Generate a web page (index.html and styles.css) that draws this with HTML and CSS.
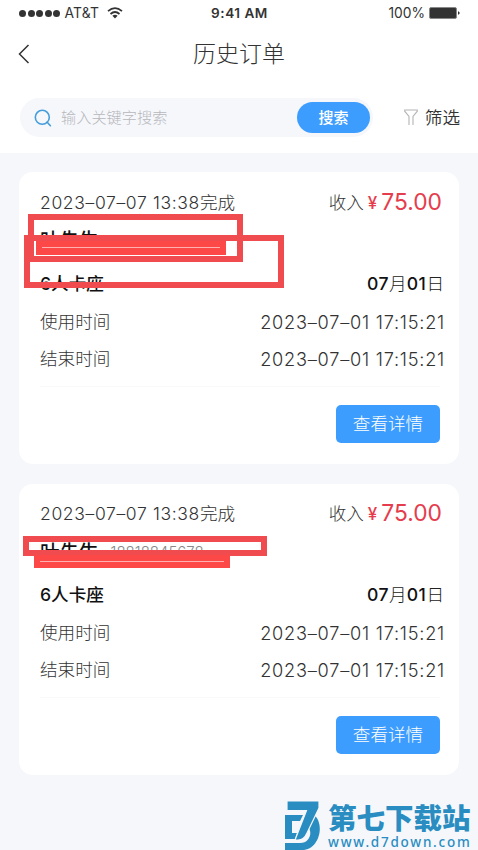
FILE: index.html
```html
<!DOCTYPE html>
<html lang="zh-CN">
<head>
<meta charset="utf-8">
<title>历史订单</title>
<link rel="stylesheet" href="styles.css">
</head>
<body>
<header class="top">
  <div class="status">
    <div class="carrier"><i class="dot"></i><i class="dot"></i><i class="dot"></i><i class="dot"></i><i class="dot"></i><span class="net">AT&amp;T</span>
      <svg class="wifi" width="16" height="12" viewBox="0 0 16 12"><g fill="none" stroke="#333" stroke-width="1.7"><path d="M1 4.2Q8-1.8 15 4.2"/><path d="M3.5 7Q8 3 12.5 7"/></g><path d="M5.4 8.8Q8 6.7 10.6 8.8L8 11.4z" fill="#333"/></svg>
    </div>
    <div class="clock">9:41 AM</div>
    <div class="power"><span>100%</span><svg width="31" height="12" viewBox="0 0 31 12"><rect x=".5" y=".5" width="27" height="11" rx="1.5" fill="#333" stroke="#888"/><path d="M29 4l2 2-2 2z" fill="#333"/></svg></div>
  </div>
  <div class="nav">
    <svg class="back" width="12" height="20" viewBox="0 0 12 20"><path d="M10.5 1L1.5 10l9 9" fill="none" stroke="#333" stroke-width="1.5"/></svg>
    <h1 class="title">历史订单</h1>
  </div>
  <div class="tools">
    <div class="search">
      <svg width="18" height="18" viewBox="0 0 18 18" fill="none" stroke="#459edb" stroke-width="1.6"><circle cx="8.3" cy="8.3" r="7"/><path d="M13 13l3.4 3.7" stroke-linecap="round"/></svg>
      <span class="hint">输入关键字搜索</span>
      <span class="go">搜索</span>
    </div>
    <div class="filter"><svg width="14" height="17" viewBox="0 0 14 17" fill="none" stroke="#b4b4b4" stroke-width="1.1"><path d="M5 16V7.5L.7 2.2V1h12.6v1.2L9 7.5V16"/></svg><span>筛选</span></div>
  </div>
</header>
<main class="orders">
  <article class="card">
    <div class="row first"><div class="done"><span class="num">2023–07–07 13:38</span>完成</div><div class="income">收入<span class="yen">¥</span><span class="amount">75.00</span></div></div>
    <div class="row guest"><b class="name">叶先生</b></div>
    <div class="row seat"><b class="seat-name">6人卡座</b><div class="day"><b>07</b>月<b>01</b>日</div></div>
    <div class="row"><span>使用时间</span><span class="num time">2023–07–01 17:15:21</span></div>
    <div class="row"><span>结束时间</span><span class="num time">2023–07–01 17:15:21</span></div>
    <div class="foot"><span class="detail">查看详情</span></div>
    <i class="frame frame-a"></i><i class="frame frame-b"></i><i class="bar bar-a"></i>
  </article>
  <article class="card">
    <div class="row first"><div class="done"><span class="num">2023–07–07 13:38</span>完成</div><div class="income">收入<span class="yen">¥</span><span class="amount">75.00</span></div></div>
    <div class="row guest second"><b class="name">叶先生</b><span class="phone">18818845678</span></div>
    <div class="row seat"><b class="seat-name">6人卡座</b><div class="day"><b>07</b>月<b>01</b>日</div></div>
    <div class="row"><span>使用时间</span><span class="num time">2023–07–01 17:15:21</span></div>
    <div class="row"><span>结束时间</span><span class="num time">2023–07–01 17:15:21</span></div>
    <div class="foot"><span class="detail">查看详情</span></div>
    <i class="frame frame-c"></i><i class="bar bar-c"></i>
  </article>
</main>
<div class="mark">
  <svg width="36" height="49" viewBox="0 0 36 49"><path d="M0 14h18l-3 6H7v10L0 38z" fill="#298dc1"/><path d="M0 38V24h7v8h5l-2 6z" fill="#298dc1"/><path d="M29 14c11 8 6 35-12 35H0v-7h15c11 0 13-13 7-17z" fill="#298dc1"/><path d="M2 0h32v7L22 32q-3 7-9 7H10L21.500 9.500H2z" fill="#298dc1" stroke="#f5f7fb" stroke-width="1.200"/></svg>
  <div class="site"><div class="site-name">第七下载站</div><div class="site-url">www.d7down.com</div></div>
</div>
</body>
</html>
```
FILE: styles.css
```css
* { box-sizing: border-box; }
body {
  margin: 0;
  height: 850px;
  overflow: hidden;
  position: relative;
  background: #f5f7fb;
  color: #333;
  font-family: Inter, "Noto Sans CJK SC", sans-serif;
  font-weight: 300;
}
.top { height: 153px; background: #fff; }
.status {
  height: 26px;
  padding: 0 18px 0 19px;
  display: grid;
  grid-template-columns: 1fr auto 1fr;
  align-items: center;
  font-size: 13.8px;
  font-weight: 400;
}
.carrier { display: flex; align-items: center; gap: 1.5px; }
.dot { width: 7px; height: 7px; border-radius: 50%; background: #333; }
.net { margin-left: 3px; letter-spacing: .2px; }
.wifi { margin-left: 6px; }
.clock { font-weight: 600; font-size: 13.6px; letter-spacing: .5px; }
.power { display: flex; justify-content: flex-end; align-items: center; gap: 4px; }
.nav { height: 56px; display: flex; align-items: center; justify-content: center; padding: 0 18px; }
.back { margin-right: auto; }
.title { margin: 0 30px 0 0; margin-right: auto; padding-right: 12px; font-size: 23px; font-weight: 300; line-height: 30px; }
.tools { display: flex; align-items: center; justify-content: space-between; padding: 16px 18px 0 20px; }
.search {
  width: 353px;
  height: 39px;
  padding: 0 3px 0 14px;
  border-radius: 20px;
  background: #f5f7fb;
  display: flex;
  align-items: center;
}
.hint { margin-left: 9px; font-size: 15.2px; line-height: 22px; color: #b8b8bb; }
.go {
  margin-left: auto;
  width: 73px;
  height: 31px;
  border-radius: 16px;
  background: #3d9dfe;
  color: #fff;
  font-size: 15px;
  font-weight: 500;
  line-height: 31px;
  text-align: center;
}
.filter { display: flex; align-items: center; gap: 7px; font-size: 17.6px; font-weight: 350; line-height: 26px; }
.orders { padding: 19px 19px 0; display: flex; flex-direction: column; gap: 20px; }
.card {
  position: relative;
  height: 291.5px;
  padding: 12px 15px 0 21px;
  border-radius: 14px;
  background: #fff;
}
.row {
  height: 37px;
  display: flex;
  align-items: center;
  justify-content: space-between;
  font-size: 17.6px;
  line-height: 26px;
  white-space: nowrap;
}
.first { padding-right: 2px; }
.num { font-size: 17.5px; letter-spacing: .65px; }
.time { font-size: 18.2px; letter-spacing: .75px; margin-right: -1px; }
.income { display: flex; align-items: center; }
.yen { margin-left: 4px; font-size: 17px; font-weight: 500; color: #e53d4d; }
.amount { margin: -2px 0 0 4px; font-size: 22.8px; font-weight: 400; color: #e53d4d; }
.guest { justify-content: flex-start; gap: 12px; height: 38px; }
.name { font-size: 19.5px; font-weight: 500; color: #111; }
.phone { font-size: 15px; color: #888; }
.seat { height: 44px; padding-top: 5px; color: #222; }
.seat-name, .day b { font-weight: 500; color: #111; }
.day b { letter-spacing: .5px; }
.foot { margin: 8.5px 4px 0 0; padding-top: 18px; border-top: 1px solid #f9f9fa; display: flex; justify-content: flex-end; }
.detail {
  width: 104px;
  height: 38px;
  border-radius: 5px;
  background: #3d9dfe;
  color: #fff;
  font-size: 17.6px;
  line-height: 38px;
  text-align: center;
}
/* Redaction marks lie over the customer details. */
.frame { position: absolute; border: 6.5px solid #f04b4e; }
.bar { position: absolute; background: #fd4848; }
.bar::after { content: ""; position: absolute; left: 6px; right: 6px; top: 6px; height: 1px; background: #ffb0b0; }
.frame-a { left: 9px; top: 42px; width: 215px; height: 48px; }
.frame-b { left: 5px; top: 63px; width: 260px; height: 53px; }
.bar-a { left: 17px; top: 69px; width: 190px; height: 14px; }
.frame-c { left: 4px; top: 52px; width: 244px; height: 20px; }
.bar-c { left: 15px; top: 71px; width: 196px; height: 13px; }
.mark { position: absolute; left: 285px; top: 801px; display: flex; gap: 7px; color: #298dc1; }
.site { padding-top: 1px; }
.site-name { font-size: 28.5px; font-weight: 900; line-height: 33px; white-space: nowrap; }
.site-url { font-family: "Noto Sans", sans-serif; font-size: 13.5px; font-weight: 500; line-height: 14px; letter-spacing: 1.75px; }
```
